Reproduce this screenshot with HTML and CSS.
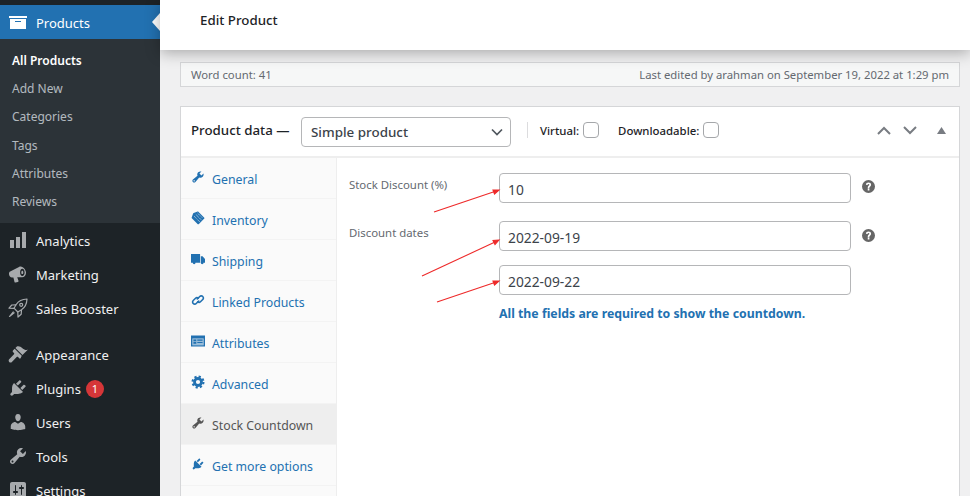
FILE: index.html
```html
<!DOCTYPE html>
<html lang="en">

<head>
    <meta charset="UTF-8">
    <meta name="viewport" content="width=device-width, initial-scale=1.0">
    <title>Edit Product</title>
    <link rel="stylesheet" href="styles.css">
</head>

<body>
    <svg class="icon-defs" width="0" height="0">
        <symbol id="i-archive" viewBox="0 0 20 20"><path d="M19 4v2H1V4h18zM2 7h16v10H2V7zm11 3V9H7v1h6z"/></symbol>
        <symbol id="i-chart" viewBox="0 0 20 20"><path d="M18 18V2h-4v16h4zm-6 0V7H8v11h4zm-6 0v-8H2v8h4z"/></symbol>
        <symbol id="i-megaphone" viewBox="0 0 20 20"><path d="M1 9.800c-.1-1 .4-1.800 1.200-2.200L11 3c1.100-.6 2.500-.5 3.700.3 1.900 1.200 3.300 3.300 3.300 5.500 0 2.700-1.700 4.500-3.900 4.500H9.200l1.300 3.500c.2.500-.1 1-.6 1.100l-2.400.6c-.5.100-.9-.1-1-.6l-1.100-4.500H4c-1.700 0-2.800-1.200-3-3.100zM14.300 4.800c-1.300 0-2.200 1.500-2.200 3.600s.9 3.600 2.200 3.600 2.300-1.500 2.300-3.600-1-3.600-2.300-3.600zm0 2c.6 0 1 .7 1 1.600s-.4 1.600-1 1.600-1-.7-1-1.600.4-1.600 1-1.600z" fill-rule="evenodd"/></symbol>
        <symbol id="i-rocket" viewBox="0 0 20 20"><g fill="none" stroke="currentColor" stroke-width="1.200" stroke-linejoin="round"><path d="M19 1c-4.800.2-8.500 2-10.800 5.500L6 10.200l3.800 3.800 3.700-2.200C17 9.500 18.800 5.800 19 1z"/><path d="M8.200 6.800 3.800 7 1 10.200l5 .2M13.500 11.800 13.200 16.200 10 19l-.2-5"/><path d="M5.500 13.500 1.500 18.500l5-4"/><circle cx="13.200" cy="6.800" r="1.500"/></g></symbol>
        <symbol id="i-brush" viewBox="0 0 20 20"><path d="M14.480 11.060L7.410 3.990l1.500-1.500c.5-.56 2.300-.47 3.510.32 1.210.8 1.430 1.280 2.910 2.100 1.180.64 2.450 1.260 4.450.85zm-.71.710L6.700 4.700 4.930 6.470c-.39.39-.39 1.020 0 1.410l1.060 1.060c.39.39.39 1.030 0 1.420L1.200 15.200c-.7.700-.7 1.900 0 2.700s2 .8 2.700 0l4.800-4.800c.39-.39 1.030-.39 1.420 0l1.060 1.060c.39.39 1.020.39 1.410 0z"/></symbol>
        <symbol id="i-plug" viewBox="0 0 20 20"><path d="M13.110 4.360L9.870 7.600 8 5.730l3.240-3.240c.35-.34 1.050-.2 1.560.32.52.51.66 1.210.31 1.550zm-8 1.770l.91-1.120 9.010 9.010-1.190.84c-.71.71-2.630 1.160-3.820 1.160H6.140L4.900 17.260c-.59.59-1.540.59-2.120 0-.59-.58-.59-1.530 0-2.120l1.240-1.240v-3.880c0-1.130.4-3.190 1.090-3.890zm7.260 3.970l3.240-3.240c.34-.35 1.040-.21 1.550.31.52.51.66 1.210.31 1.550l-3.240 3.250z"/></symbol>
        <symbol id="i-user" viewBox="0 0 20 20"><path d="M10 9.250c-2.270 0-2.730-3.440-2.730-3.440C7 4.020 7.820 2 9.970 2c2.160 0 2.980 2.020 2.710 3.810 0 0-.41 3.440-2.680 3.440zm0 2.570L12.720 10c2.390 0 4.520 2.330 4.520 4.530v2.490s-3.650 1.130-7.240 1.130c-3.650 0-7.240-1.130-7.240-1.130v-2.490c0-2.250 1.940-4.480 4.470-4.480z"/></symbol>
        <symbol id="i-wrench" viewBox="0 0 20 20"><path d="M16.680 9.770c-1.340 1.340-3.300 1.670-4.950.99l-5.410 6.520c-.99.99-2.590.99-3.580 0s-.99-2.590 0-3.570l6.520-5.42c-.68-1.650-.35-3.610.99-4.950 1.280-1.280 3.120-1.620 4.720-1.060l-2.890 2.890 2.820 2.820 2.860-2.870c.53 1.580.18 3.390-1.080 4.650zM3.810 16.210c.4.39 1.040.39 1.430 0 .4-.4.4-1.040 0-1.430-.39-.4-1.030-.4-1.430 0-.39.39-.39 1.030 0 1.430z"/></symbol>
        <symbol id="i-sliders" viewBox="0 0 20 20"><path d="M18 16V4c0-1.100-.9-2-2-2H4c-1.100 0-2 .9-2 2v12c0 1.100.9 2 2 2h12c1.100 0 2-.9 2-2zM8 11h1c.55 0 1 .45 1 1s-.45 1-1 1H8v1.500c0 .28-.22.5-.5.5s-.5-.22-.5-.5V13H6c-.55 0-1-.45-1-1s.45-1 1-1h1V5.500c0-.28.22-.5.5-.5s.5.22.5.5V11zm5-2h-1c-.55 0-1-.45-1-1s.45-1 1-1h1V5.500c0-.28.22-.5.5-.5s.5.22.5.5V7h1c.55 0 1 .45 1 1s-.45 1-1 1h-1v5.500c0 .28-.22.5-.5.5s-.5-.22-.5-.5V9z"/></symbol>
        <symbol id="i-tag" viewBox="0 0 20 20"><path d="M10.500 1 19 9.500c.4.400.4.900 0 1.300L11 18.800c-.4.400-.9.400-1.300 0L1.200 10.300c-.3-.3-.4-.7-.2-1.100L3 3.500c.1-.4.400-.7.800-.8L9.500.8c.4-.1.700 0 1 .2z"/><path d="M4.500 7.500l8 8M7 5l8 8M9.500 3l7 7" stroke="#fafafa" stroke-width="1" stroke-dasharray="1.500 1" fill="none"/></symbol>
        <symbol id="i-truck" viewBox="0 0 20 20"><path d="M0 3h13v12.500H0zM14 6h2.500l3.500 4v5.500h-6z"/><circle cx="4.500" cy="15.500" r="2"/><circle cx="16" cy="15.500" r="2"/></symbol>
        <symbol id="i-link" viewBox="0 0 20 20"><g fill="none" stroke="currentColor" stroke-width="2.300" stroke-linecap="round"><path d="M9 8.500l3.500-3.500a3 3 0 0 1 4.300 0 3 3 0 0 1 0 4.300L13.500 12.500a3 3 0 0 1-4 .2"/><path d="M11 11.500L7.500 15a3 3 0 0 1-4.300 0 3 3 0 0 1 0-4.300L6.500 7.500a3 3 0 0 1 4-.2"/></g></symbol>
        <symbol id="i-card" viewBox="0 0 20 20"><path fill-rule="evenodd" d="M0 2h20v16H0zM2 6.500v9.500h16V6.500zM3.500 8h4v2.500h-4zM9 8h7.500v1.500H9zM3.500 11.500h4V14h-4zM9 11.500h7.500V13H9z"/><path d="M2 6.500h16V16H2z" opacity=".45"/></symbol>
        <symbol id="i-gear" viewBox="0 0 20 20"><g fill="none" stroke="currentColor"><circle cx="10" cy="10" r="5" stroke-width="4"/><circle cx="10" cy="10" r="7.800" stroke-width="3" stroke-dasharray="3.100 3.020"/></g></symbol>
        <symbol id="i-help" viewBox="0 0 20 20"><path fill-rule="evenodd" d="M10 0a10 10 0 1 1 0 20a10 10 0 0 1 0-20zM8.800 13.200v2.800h2.600v-2.800zM10 4c-2.300 0-3.800 1.300-4 3.400l2.500.3c.1-1 .7-1.500 1.500-1.500s1.300.5 1.300 1.100c0 1.300-2.500 1.600-2.500 4.600v.6h2.500v-.4c0-1.900 2.700-2.300 2.700-4.900C14 5.200 12.300 4 10 4z"/></symbol>
    </svg>

    <!-- admin menu -->
    <nav class="sidebar">
        <a class="menu-item current">
            <svg class="menu-icon"><use href="#i-archive"/></svg>Products
        </a>
        <ul class="submenu">
            <li class="active">All Products</li>
            <li>Add New</li>
            <li>Categories</li>
            <li>Tags</li>
            <li>Attributes</li>
            <li>Reviews</li>
        </ul>
        <a class="menu-item"><svg class="menu-icon"><use href="#i-chart"/></svg>Analytics</a>
        <a class="menu-item"><svg class="menu-icon"><use href="#i-megaphone"/></svg>Marketing</a>
        <a class="menu-item"><svg class="menu-icon"><use href="#i-rocket"/></svg>Sales Booster</a>
        <div class="menu-sep"></div>
        <a class="menu-item"><svg class="menu-icon"><use href="#i-brush"/></svg>Appearance</a>
        <a class="menu-item"><svg class="menu-icon"><use href="#i-plug"/></svg>Plugins<span class="badge">1</span></a>
        <a class="menu-item"><svg class="menu-icon"><use href="#i-user"/></svg>Users</a>
        <a class="menu-item"><svg class="menu-icon"><use href="#i-wrench"/></svg>Tools</a>
        <a class="menu-item"><svg class="menu-icon"><use href="#i-sliders"/></svg>Settings</a>
    </nav>

    <div class="main">
        <header class="topbar">Edit Product</header>

        <div class="content">
            <div class="status-bar">
                <span>Word count: 41</span>
                <span>Last edited by arahman on September 19, 2022 at 1:29 pm</span>
            </div>

            <section class="panel">
                <div class="panel-head">
                    <span class="panel-title">Product data —</span>
                    <div class="select-box">
                        <span>Simple product</span>
                        <svg class="select-arrow" viewBox="0 0 12 8"><path d="M1 1.500l5 5 5-5" fill="none" stroke="#50575e" stroke-width="1.700"/></svg>
                    </div>
                    <label class="check-label first">Virtual: <input type="checkbox"></label>
                    <label class="check-label">Downloadable: <input type="checkbox"></label>
                    <div class="panel-actions">
                        <svg class="chevron" viewBox="0 0 14 9"><path d="M1 8l6-6 6 6" fill="none" stroke="#787c82" stroke-width="2"/></svg>
                        <svg class="chevron" viewBox="0 0 14 9"><path d="M1 1l6 6 6-6" fill="none" stroke="#787c82" stroke-width="2"/></svg>
                        <svg class="toggle" viewBox="0 0 9 7"><path d="M4.500 0L9 7H0z" fill="#787c82"/></svg>
                    </div>
                </div>

                <div class="panel-body">
                    <ul class="tabs">
                        <li><svg class="tab-icon"><use href="#i-wrench"/></svg>General</li>
                        <li><svg class="tab-icon"><use href="#i-tag"/></svg>Inventory</li>
                        <li><svg class="tab-icon"><use href="#i-truck"/></svg>Shipping</li>
                        <li><svg class="tab-icon"><use href="#i-link"/></svg>Linked Products</li>
                        <li><svg class="tab-icon"><use href="#i-card"/></svg>Attributes</li>
                        <li><svg class="tab-icon"><use href="#i-gear"/></svg>Advanced</li>
                        <li class="selected"><svg class="tab-icon"><use href="#i-wrench"/></svg>Stock Countdown</li>
                        <li><svg class="tab-icon"><use href="#i-plug"/></svg>Get more options</li>
                    </ul>

                    <div class="fields">
                        <div class="field">
                            <label class="field-label">Stock Discount (%)</label>
                            <input class="text-input" type="text" value="10">
                            <svg class="help"><use href="#i-help"/></svg>
                        </div>
                        <div class="field">
                            <label class="field-label">Discount dates</label>
                            <input class="text-input" type="text" value="2022-09-19">
                            <svg class="help help-low"><use href="#i-help"/></svg>
                        </div>
                        <div class="field field-tight">
                            <span class="field-label"></span>
                            <input class="text-input" type="text" value="2022-09-22">
                        </div>
                        <p class="notice">All the fields are required to show the countdown.</p>
                    </div>
                </div>
            </section>
        </div>
    </div>

    <!-- hand drawn annotation arrows -->
    <svg class="arrows" viewBox="0 0 970 496">
        <g stroke="#ee2a2a" stroke-width="1.100" fill="#ee2a2a">
            <path d="M434 212L494 191.700"/>
            <path d="M499 190L493 190L494.500 194z"/>
            <path d="M422 276L494 242.500"/>
            <path d="M499 240L493 240.500L495 244.500z"/>
            <path d="M437 302L494 282.700"/>
            <path d="M499 281L493 281L494.500 285z"/>
        </g>
    </svg>
</body>

</html>
```

FILE: styles.css
```css
* {
    box-sizing: border-box;
}

body {
    margin: 0;
    height: 496px;
    overflow: hidden;
    display: flex;
    background-color: #f0f0f1;
    font-family: "Noto Sans", Arial, sans-serif;
    color: #3c434a;
    font-size: 13px;
}

ul {
    margin: 0;
    padding: 0;
    list-style: none;
}

.icon-defs {
    position: absolute;
}

/* sidebar */
.sidebar {
    flex: 0 0 160px;
    height: 520px;
    padding-top: 5px;
    background-color: #1d2327;
    color: #f0f0f1;
}

.menu-item {
    display: flex;
    align-items: center;
    height: 34px;
    padding-top: 1px;
    padding-left: 8px;
    font-size: 13px;
    color: #f0f0f1;
}

.menu-icon {
    flex: 0 0 20px;
    width: 20px;
    height: 20px;
    margin-right: 8px;
    margin-top: -1px;
    fill: #a7aaad;
    color: #a7aaad;
}

.menu-item.current {
    position: relative;
    background-color: #2271b1;
    color: #fff;
}

.menu-item.current .menu-icon {
    fill: #fff;
}

.menu-item.current::after {
    content: "";
    position: absolute;
    right: 0;
    top: 8px;
    border: 9px solid transparent;
    border-left-width: 0;
    border-right: 8px solid #fff;
}

.submenu {
    height: 184px;
    padding-top: 8px;
    background-color: #2c3338;
    color: rgba(240, 246, 252, 0.7);
}

.submenu li {
    height: 28.200px;
    line-height: 28px;
    padding-left: 12px;
    font-size: 12px;
}

.submenu li.active {
    color: #fff;
    font-weight: 600;
}

.menu-sep {
    height: 12px;
}

.badge {
    width: 18px;
    height: 18px;
    margin-left: 5px;
    border-radius: 50%;
    background-color: #d63638;
    color: #fff;
    font-size: 11px;
    line-height: 18px;
    text-align: center;
}

/* main column */
.main {
    flex: 1;
    min-width: 0;
}

.topbar {
    position: relative;
    z-index: 2;
    height: 50px;
    padding: 10px 40px;
    background-color: #fff;
    box-shadow: 0 3px 14px rgba(0, 0, 0, 0.3);
    font-size: 13.300px;
    font-weight: 500;
    line-height: 20px;
    color: #1d2327;
}

.content {
    padding: 12px 10px 0 20px;
}

.status-bar {
    display: flex;
    justify-content: space-between;
    align-items: center;
    height: 25px;
    padding: 0 10px;
    background-color: #f6f7f7;
    border: 1px solid #d5d6d8;
    font-size: 11.300px;
    color: #646970;
}

.panel {
    margin-top: 19px;
    height: 420px;
    background-color: #fff;
    border: 1px solid #d5d6d8;
}

.panel-head {
    display: flex;
    align-items: center;
    height: 51px;
    padding: 0 10px;
    border-bottom: 2px solid #eee;
}

.panel-title {
    flex: 0 0 110px;
    margin-top: -3px;
    font-size: 13.300px;
    font-weight: 500;
    color: #1d2327;
}

.select-box {
    display: flex;
    align-items: center;
    justify-content: space-between;
    width: 210px;
    height: 30px;
    padding: 0 7px 0 9px;
    border: 1px solid #b5b6b8;
    border-radius: 4px;
    font-size: 13.400px;
    font-weight: 500;
}

.select-arrow {
    width: 12px;
    height: 8px;
}

.check-label {
    display: flex;
    align-items: center;
    gap: 4px;
    margin-left: 19px;
    margin-top: -3px;
    font-size: 11.400px;
    font-weight: 500;
    color: #1d2327;
}

.check-label.first {
    margin-left: 16px;
    padding-left: 12px;
    border-left: 1px solid #dcdcde;
}

.check-label input {
    appearance: none;
    width: 16px;
    height: 16px;
    margin: 0;
    background-color: #fff;
    border: 1px solid #a5a7aa;
    border-radius: 4px;
}

.panel-actions {
    display: flex;
    align-items: center;
    gap: 12px;
    margin-left: auto;
    margin-right: 3px;
    margin-top: -2px;
}

.chevron {
    width: 14px;
    height: 9px;
}

.toggle {
    width: 9px;
    height: 7px;
    margin-left: 8px;
}

.panel-body {
    display: flex;
    height: 100%;
}

.tabs {
    flex: 0 0 156px;
    background-color: #fafafa;
    border-right: 1px solid #eee;
}

.tabs li {
    display: flex;
    align-items: center;
    height: 41px;
    padding-top: 2px;
    padding-left: 10px;
    border-bottom: 1px solid #f3f3f3;
    font-size: 12.300px;
    color: #2271b1;
}

.tabs li.selected {
    background-color: #eee;
    color: #555;
}

.tab-icon {
    flex: 0 0 14px;
    width: 14px;
    height: 14px;
    margin-right: 7px;
    margin-top: -4px;
    fill: #2271b1;
    color: #2271b1;
}

.tabs li.selected .tab-icon {
    fill: #555;
    color: #555;
}

.fields {
    flex: 1;
    padding: 15px 12px;
}

.field {
    display: flex;
    align-items: flex-start;
    margin-bottom: 18px;
}

.field-tight {
    margin-top: -4px;
    margin-bottom: 0;
}

.field-label {
    flex: 0 0 150px;
    margin-top: 4px;
    font-size: 11.400px;
    color: #646970;
}

.text-input {
    width: 352px;
    height: 30px;
    padding: 2px 8px 0;
    background-color: #fff;
    border: 1px solid #b5b6b8;
    border-radius: 4px;
    font-family: "Noto Sans", Arial, sans-serif;
    font-size: 13.800px;
    color: #3c434a;
}

.help {
    width: 13px;
    height: 13px;
    margin: 7px 0 0 11px;
    fill: #666;
}

.help-low {
    margin-top: 8px;
}

.notice {
    margin: 10px 0 0 150px;
    font-size: 12.300px;
    font-weight: 700;
    color: #2271b1;
}

/* annotation layer */
.arrows {
    position: absolute;
    top: 0;
    left: 0;
    width: 970px;
    height: 496px;
    z-index: 3;
    pointer-events: none;
}
```
